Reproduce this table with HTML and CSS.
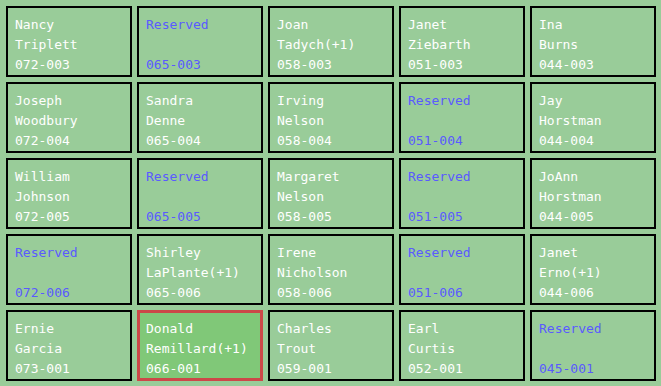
FILE: index.html
```html
<!DOCTYPE html>
<html>
<head>
<meta charset="utf-8">
<link rel="stylesheet" href="styles.css">
</head>
<body>
<div class="grid">
  <div class="cell"><div>Nancy</div><div>Triplett</div><div>072-003</div></div>
  <div class="cell reserved"><div>Reserved</div><div>&nbsp;</div><div>065-003</div></div>
  <div class="cell"><div>Joan</div><div>Tadych(+1)</div><div>058-003</div></div>
  <div class="cell"><div>Janet</div><div>Ziebarth</div><div>051-003</div></div>
  <div class="cell"><div>Ina</div><div>Burns</div><div>044-003</div></div>

  <div class="cell"><div>Joseph</div><div>Woodbury</div><div>072-004</div></div>
  <div class="cell"><div>Sandra</div><div>Denne</div><div>065-004</div></div>
  <div class="cell"><div>Irving</div><div>Nelson</div><div>058-004</div></div>
  <div class="cell reserved"><div>Reserved</div><div>&nbsp;</div><div>051-004</div></div>
  <div class="cell"><div>Jay</div><div>Horstman</div><div>044-004</div></div>

  <div class="cell"><div>William</div><div>Johnson</div><div>072-005</div></div>
  <div class="cell reserved"><div>Reserved</div><div>&nbsp;</div><div>065-005</div></div>
  <div class="cell"><div>Margaret</div><div>Nelson</div><div>058-005</div></div>
  <div class="cell reserved"><div>Reserved</div><div>&nbsp;</div><div>051-005</div></div>
  <div class="cell"><div>JoAnn</div><div>Horstman</div><div>044-005</div></div>

  <div class="cell reserved"><div>Reserved</div><div>&nbsp;</div><div>072-006</div></div>
  <div class="cell"><div>Shirley</div><div>LaPlante(+1)</div><div>065-006</div></div>
  <div class="cell"><div>Irene</div><div>Nicholson</div><div>058-006</div></div>
  <div class="cell reserved"><div>Reserved</div><div>&nbsp;</div><div>051-006</div></div>
  <div class="cell"><div>Janet</div><div>Erno(+1)</div><div>044-006</div></div>

  <div class="cell"><div>Ernie</div><div>Garcia</div><div>073-001</div></div>
  <div class="cell selected"><div>Donald</div><div>Remillard(+1)</div><div>066-001</div></div>
  <div class="cell"><div>Charles</div><div>Trout</div><div>059-001</div></div>
  <div class="cell"><div>Earl</div><div>Curtis</div><div>052-001</div></div>
  <div class="cell reserved"><div>Reserved</div><div>&nbsp;</div><div>045-001</div></div>
</div>
</body>
</html>
```
FILE: styles.css
```css
html, body {
  margin: 0;
  padding: 0;
  background: #99cc99;
}
.grid {
  display: grid;
  grid-template-columns: repeat(5, 126px);
  grid-template-rows: repeat(5, 71px);
  gap: 5px;
  padding: 6px 5px 5px 6px;
  font-family: "DejaVu Sans Mono", monospace;
  font-size: 13px;
  line-height: 20px;
  color: #ffffff;
}
.cell {
  box-sizing: border-box;
  border: 2px solid #000000;
  padding: 7px 0 0 7px;
  white-space: nowrap;
  overflow: hidden;
}
.reserved {
  color: #5a5aff;
}
.selected {
  border: 3px solid #cc4848;
  background: #80c878;
  padding: 6px 0 0 6px;
}
```
